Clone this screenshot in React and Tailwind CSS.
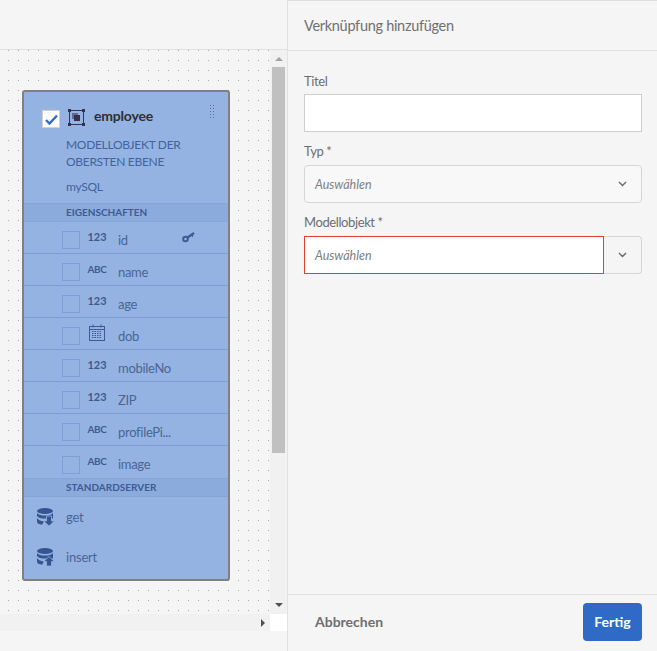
const Badge = ({ t }) => (
  <span className={`w-[26px] leading-none font-bold text-[#3f5a94] text-center ${t === "ABC" ? "text-[10px] tracking-[-0.3px]" : "text-[11px]"}`}>{t}</span>
);

const CalIcon = () => (
  <svg width="18" height="18" viewBox="0 0 18 18" className="text-[#3f5a94]" fill="none" stroke="currentColor">
    <rect x="1.5" y="2.5" width="15" height="14" />
    <path d="M1.5 5.5h15M5 0.5v3M13 0.5v3" />
    <path d="M4 7.5h10M4 9.5h10M4 11.5h10M4 13.5h10" strokeDasharray="1.5 1" strokeWidth="1.2" />
  </svg>
);

const KeyIcon = () => (
  <svg width="13" height="11" viewBox="0 0 13 11" fill="none" stroke="#3f5a94">
    <circle cx="3.500" cy="7" r="2.300" strokeWidth="2" />
    <path d="M5.500 5.500L12 1" strokeWidth="2.200" />
    <path d="M9.500 3l1.500 1.500" strokeWidth="1.600" />
  </svg>
);

const Row = ({ t, label, cal, k, last }) => (
  <div className={`h-8 flex items-center pl-[38px] pr-[33px] ${last ? "" : "border-b border-[#7d9fd3]"}`}>
    <span className="w-[18px] h-[18px] border border-[#7d9fd3] mt-[5px] shrink-0" />
    <span className="ml-2 w-[18px] flex justify-center mb-[2px] shrink-0">
      {cal ? <CalIcon /> : <Badge t={t} />}
    </span>
    <span className="ml-[12px] flex-1 text-[13px] tracking-[-0.3px] text-[#4b6593] mt-[5px] leading-none">{label}</span>
    {k && <span className="mb-[1px]"><KeyIcon /></span>}
  </div>
);

const Band = ({ children, pl }) => (
  <div className={`h-[19px] flex items-center bg-[#8aabdc] border-y border-[#86a6d8] ${pl} text-[10px] font-bold text-[#3f5a94]`}>
    {children}
  </div>
);

const DbIcon = ({ up }) => (
  <svg width="18" height="18" viewBox="0 0 18 18" fill="#34558f">
    <ellipse cx="8" cy="3" rx="8" ry="3" />
    <path d="M0 5v2.5C0 9 3 10.4 7 10.6H16V5c-1.500 1.800-4.500 2.600-8 2.600S1.500 6.800 0 5z" />
    <path d="M0 10v4c0 1.200 2 2.300 5 2.700L7 13.500C3.500 13 1 11.800 0 10z" />
    {up ? (
      <path d="M12 8.500l5.500 5h-3V18h-5v-4.500h-3z" stroke="#94b3e2" strokeWidth="0.8" />
    ) : (
      <path d="M9.500 8h5v5h3L12 18l-5.500-5h3z" stroke="#94b3e2" strokeWidth="0.8" />
    )}
  </svg>
);

const Chevron = () => (
  <svg width="9" height="6" viewBox="0 0 9 6" fill="none" stroke="#6e6e6e" strokeWidth="1.5">
    <path d="M1 1l3.500 3.500L8 1" />
  </svg>
);

const rows = [
  { t: "123", label: "id", k: true },
  { t: "ABC", label: "name" },
  { t: "123", label: "age" },
  { cal: true, label: "dob" },
  { t: "123", label: "mobileNo" },
  { t: "123", label: "ZIP" },
  { t: "ABC", label: "profilePi..." },
  { t: "ABC", label: "image", last: true },
];

export default function App() {
  return (
    <div className="w-[657px] h-[651px] flex bg-[#f5f5f5] overflow-hidden font-['Lato','Open_Sans',sans-serif] text-[#6e6e6e]">
      <div className="w-[288px] shrink-0 border-r border-[#e1e1e1] flex flex-col">
        <div className="h-[50px] shrink-0 border-b border-[#e1e1e1]" />
        <div className="h-[564px] shrink-0 flex">
          <div className="w-[270px] pl-[22px] pt-[40px] bg-[radial-gradient(circle_at_0.5px_0.5px,#a8a8a8_0.71px,transparent_0.71px)] bg-[length:10px_10px] bg-[position:8px_0px]">
            <div className="w-[208px] h-[491px] border-2 border-[#808080] rounded-[3px] bg-[#94b3e2] flex flex-col">
              <div className="h-[111px] shrink-0 pl-[18px] pt-[17px] pr-[13px]">
                <div className="flex items-start">
                  <span className="w-[18px] h-[18px] bg-white border border-[#d0d0d0] flex items-center justify-center mt-px">
                    <svg width="13" height="11" viewBox="0 0 13 11" fill="none" stroke="#2f6bc9" strokeWidth="2.4">
                      <path d="M1 6l3.500 3.500L12 1.500" />
                    </svg>
                  </span>
                  <svg className="ml-2" width="17" height="17" viewBox="0 0 17 17" fill="none">
                    <rect x="1.500" y="1.500" width="14" height="14" stroke="#3a2f5a" strokeWidth="1" />
                    <rect x="0" y="0" width="3" height="3" fill="#33324f" />
                    <rect x="14" y="0" width="3" height="3" fill="#33324f" />
                    <rect x="0" y="14" width="3" height="3" fill="#33324f" />
                    <rect x="14" y="14" width="3" height="3" fill="#33324f" />
                    <rect x="4" y="4" width="6" height="6" fill="#6a6a86" />
                    <rect x="6" y="6" width="6" height="6" fill="#33324f" />
                  </svg>
                  <span className="ml-[9px] text-sm font-bold leading-4 text-[#2f2f2f] tracking-[-0.2px] mt-[-1px]">employee</span>
                  <span className="ml-auto mt-[-5px] w-[6px] h-[14px] bg-[radial-gradient(circle,#5b6aa8_0.7px,transparent_0.8px)] bg-[length:3px_3px]" />
                </div>
                <div className="ml-[24px] mt-[8px] text-xs tracking-[-0.3px] leading-[17px] text-[#42639c]">
                  <div>MODELLOBJEKT DER</div>
                  <div>OBERSTEN EBENE</div>
                  <div className="mt-2">mySQL</div>
                </div>
              </div>
              <Band pl="pl-[42px]">EIGENSCHAFTEN</Band>
              {rows.map((r) => (
                <Row key={r.label} {...r} />
              ))}
              <Band pl="pl-[42px]">STANDARDSERVER</Band>
              <div className="h-10 flex items-center pl-[13px] text-[13px] text-[#4b6593]">
                <DbIcon />
                <span className="ml-[11px] mt-[1px] tracking-[-0.2px]">get</span>
              </div>
              <div className="h-10 flex items-center pl-[13px] text-[13px] text-[#4b6593]">
                <DbIcon up />
                <span className="ml-[11px] mt-[1px] tracking-[-0.2px]">insert</span>
              </div>
            </div>
          </div>
          <div className="flex-1 flex bg-[#f1f1f1] pl-[2px] pr-[2px]">
            <div className="w-[13px] flex flex-col items-center">
              <div className="h-[17px] pt-[7px] flex justify-center">
                <span className="w-0 h-0 border-x-[4px] border-x-transparent border-b-[4px] border-b-[#a3a3a3]" />
              </div>
              <div className="w-full h-[386px] bg-[#c0c0c0]" />
              <div className="flex-1" />
              <div className="h-[11px] flex justify-center">
                <span className="w-0 h-0 border-x-[4px] border-x-transparent border-t-[4px] border-t-[#505050]" />
              </div>
            </div>
          </div>
        </div>
        <div className="h-[17px] shrink-0 flex">
          <div className="w-[270px] bg-[#f1f1f1] flex items-center justify-end pr-[5px]">
            <span className="w-0 h-0 border-y-[4px] border-y-transparent border-l-[4px] border-l-[#505050]" />
          </div>
          <div className="flex-1 bg-white" />
        </div>
      </div>

      <div className="flex-1 flex flex-col">
        <div className="h-[51px] shrink-0 border-t border-b border-[#e1e1e1] flex items-center pl-4 text-[14.5px] tracking-[-0.3px] text-[#707070]">
          Verknüpfung hinzufügen
        </div>
        <div className="flex-1 pl-4 pr-[15px] pt-[20px] text-[13px] tracking-[-0.4px]">
          <div className="leading-[20px]">Titel</div>
          <div className="mt-[3px] h-[38px] bg-white border border-[#cdcdcd]" />
          <div className="mt-[9px] leading-[20px]">Typ *</div>
          <div className="mt-[4px] h-[38px] bg-[#f8f8f8] border border-[#d6d6d6] rounded-[4px] flex items-center justify-between pl-[10px] pr-[14px]">
            <span className="text-[12.5px] italic text-[#808080] tracking-normal mt-[3px]">Auswählen</span>
            <Chevron />
          </div>
          <div className="mt-[9px] leading-[20px]">Modellobjekt *</div>
          <div className="mt-[4px] h-[38px] flex">
            <div className="flex-1 bg-white border border-[#e2402e] flex items-center pl-[10px]">
              <span className="text-[12.5px] italic text-[#808080] tracking-normal mt-[3px]">Auswählen</span>
            </div>
            <div className="w-[38px] bg-[#f5f5f5] border border-l-0 border-[#d6d6d6] rounded-r-[4px] flex items-center justify-center">
              <Chevron />
            </div>
          </div>
        </div>
        <div className="h-[57px] shrink-0 border-t border-[#e1e1e1] pb-[2px] flex items-center justify-between pl-[27px] pr-[15px]">
          <span className="text-sm font-bold text-[#6e6e6e]">Abbrechen</span>
          <button className="w-[59px] h-[38px] rounded-[4px] bg-[#2f6ac6] text-white text-sm font-bold">Fertig</button>
        </div>
      </div>
    </div>
  );
}
